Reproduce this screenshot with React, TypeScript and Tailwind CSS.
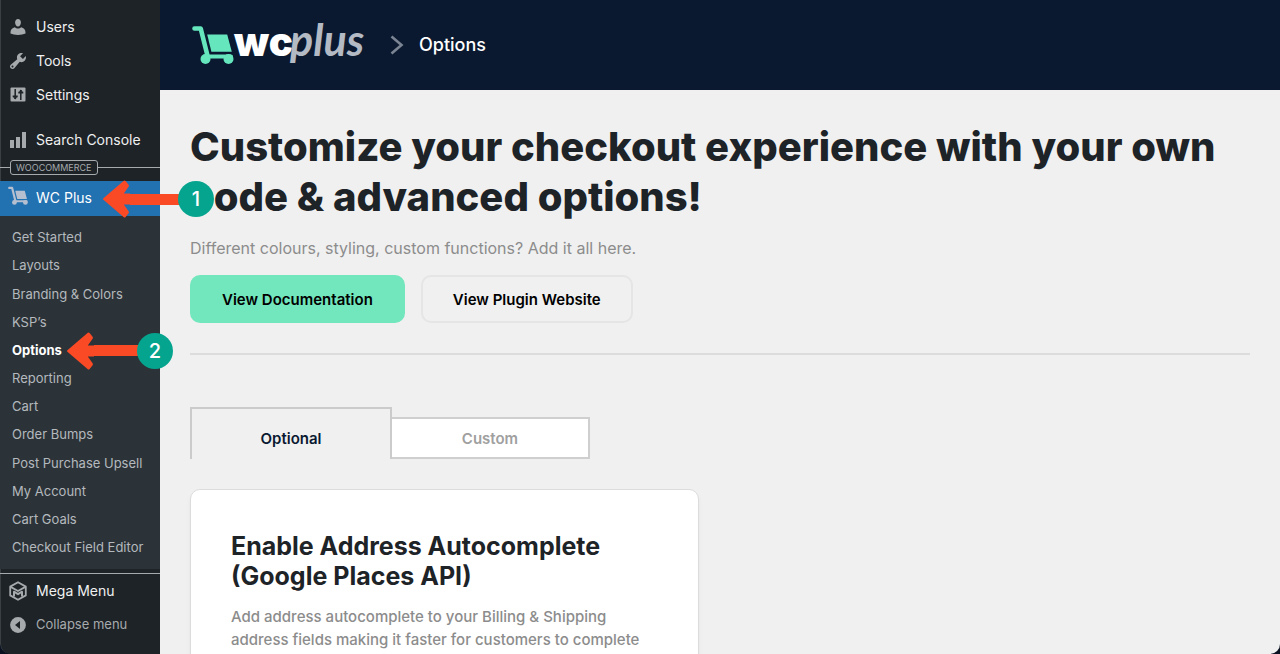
import type { ReactNode } from "react";
import clsx from "clsx";

const SUBMENU = [
  "Get Started",
  "Layouts",
  "Branding & Colors",
  "KSP’s",
  "Options",
  "Reporting",
  "Cart",
  "Order Bumps",
  "Post Purchase Upsell",
  "My Account",
  "Cart Goals",
  "Checkout Field Editor",
];

const ACTIVE_ITEM = "Options";

function UsersIcon() {
  return (
    <svg viewBox="0 0 20 20" className="size-5" fill="currentColor">
      <path d="M10 9.400c-1.700 0-2.900-2-2.900-4S8.300 2 10 2s2.900 1.400 2.900 3.400-1.200 4-2.900 4z" />
      <path d="M6.800 10.200c.9.900 2 1.300 3.200 1.300s2.300-.4 3.200-1.300c2.500.5 4.300 2.500 4.300 5v1.300c-1.900.9-4.500 1.400-7.500 1.400s-5.600-.5-7.500-1.400v-1.300c0-2.500 1.800-4.500 4.300-5z" />
    </svg>
  );
}

function ToolsIcon() {
  return (
    <svg viewBox="0 0 20 20" className="size-5" fill="currentColor">
      <path d="M16.680 9.770a4.543 4.543 0 0 1-4.950.99l-5.410 6.520c-.99.990-2.590.990-3.580 0s-.99-2.590 0-3.570l6.520-5.420c-.68-1.650-.35-3.610.99-4.950 1.280-1.280 3.120-1.620 4.720-1.060l-2.890 2.890 2.820 2.820 2.860-2.870c.53 1.580.18 3.390-1.080 4.650zM3.810 16.210c.4.390 1.040.390 1.430 0 .4-.4.400-1.040 0-1.430-.39-.4-1.030-.4-1.430 0a1.020 1.020 0 0 0 0 1.430z" />
    </svg>
  );
}

function SettingsIcon() {
  return (
    <svg viewBox="0 0 20 20" className="size-5">
      <rect x="2.500" y="2.500" width="15" height="14" rx="1" fill="currentColor" />
      <g stroke="#1d2327" fill="none">
        <path d="M7.200 4v10M12.800 5v10" strokeWidth="1.500" />
        <path d="M4.700 11.300h5M10.300 7.700h5" strokeWidth="1.800" />
      </g>
      <path d="M5.200 12.200h4l-2 2.300zM10.800 6.800h4l-2-2.300z" fill="#1d2327" />
    </svg>
  );
}

function ChartIcon() {
  return (
    <svg viewBox="0 0 20 20" className="size-5" fill="currentColor">
      <path d="M2 10h4v8H2zM8 7h4v11H8zM14 2h4v16h-4z" />
    </svg>
  );
}

function MegaMenuIcon() {
  return (
    <svg
      viewBox="0 0 20 20"
      className="size-5"
      fill="none"
      stroke="currentColor"
      strokeWidth="1.800"
      strokeLinejoin="round"
    >
      <path d="M10 1.200l7.800 4.400v8.800L10 18.800l-7.800-4.400V5.600z" />
      <path d="M2.600 5.900L10 10l7.400-4.100" />
      <path d="M6 15.500V10.700l4 2.500 4-2.500v4.800" strokeWidth="2" />
    </svg>
  );
}

function CollapseIcon() {
  return (
    <svg viewBox="0 0 20 20" className="size-5">
      <circle cx="10" cy="10" r="7.900" fill="currentColor" />
      <path d="M12 6v8l-5-4z" fill="#1d2327" />
    </svg>
  );
}

function CartMark({ className }: { className: string }) {
  return (
    <svg viewBox="0 0 42 39" className={className} fill="currentColor">
      <path
        d="M2.500 2.500h6.200l7 28"
        fill="none"
        stroke="currentColor"
        strokeWidth="4.600"
        strokeLinecap="round"
        strokeLinejoin="round"
      />
      <path d="M13 30.500h26" stroke="currentColor" strokeWidth="4" strokeLinecap="round" />
      <path d="M15.200 8.500h20l4.600 17.200H19.400z" />
      <circle cx="13.500" cy="33" r="5" />
      <circle cx="36.500" cy="33" r="5" />
    </svg>
  );
}

function MenuLink({ icon, children }: { icon: ReactNode; children: ReactNode }) {
  return (
    <a href="#" className="flex h-[34px] items-center gap-2 pl-2 text-sm text-[#f0f0f1]">
      <span className="text-[#a7aaad]">{icon}</span>
      {children}
    </a>
  );
}

type StepArrowProps = {
  step: number;
  className: string;
};

function StepArrow({ step, className }: StepArrowProps) {
  return (
    <div className={clsx("absolute flex h-[38px] items-center", className)}>
      <svg viewBox="0 0 27 38" className="h-[38px] w-[27px] shrink-0" fill="#f94a25">
        <path d="M.4 18.200L20.800.8Q21.800 0 22.600 1l3 3.800q.6.900 0 1.900L20.800 13.500H27v11h-6.200L25.600 31.300q.6 1 0 1.900L22.600 37q-.8 1-1.800.2L.4 19.800q-.8-.8 0-1.600z" />
      </svg>
      <div className="h-[11px] grow bg-[#f94a25]" />
      <div className="-ml-1 flex size-9 shrink-0 items-center justify-center rounded-full bg-[#05a48e] text-xl font-medium text-white">
        {step}
      </div>
    </div>
  );
}

function Sidebar() {
  return (
    <nav className="relative z-10 w-40 shrink-0 rounded-bl-[10px] border-l border-l-[#3a3f43] bg-[#1d2327] pt-[10px]">
      <div className="-ml-px">
        <MenuLink icon={<UsersIcon />}>Users</MenuLink>
        <MenuLink icon={<ToolsIcon />}>Tools</MenuLink>
        <MenuLink icon={<SettingsIcon />}>Settings</MenuLink>
        <div className="h-[11px]" />
        <MenuLink icon={<ChartIcon />}>Search Console</MenuLink>

        <div className="flex h-6 items-center pb-[3px]">
          <div className="h-px w-[10px] bg-[#a7aaad]" />
          <span className="flex h-[15px] items-center rounded-[3px] border border-[#a7aaad] px-[5px] text-[9px] text-[#a7aaad]">
            WOOCOMMERCE
          </span>
          <div className="h-px grow bg-[#a7aaad]" />
        </div>

        <div className="relative">
          <a href="#" className="flex h-[35px] items-center gap-2 bg-[#2271b1] pb-0.5 pl-2 text-sm text-white">
            <CartMark className="mb-1 size-5 text-[#b5bfd0]" />
            WC Plus
          </a>
          <StepArrow step={1} className="-top-px left-[103px] w-[111px]" />
        </div>

        <ul className="grid h-[353px] auto-rows-fr bg-[#2c3338] pt-2 pb-[7px]">
          {SUBMENU.map((item) => (
            <li key={item} className="relative flex items-center">
              <a
                href="#"
                className={clsx("pl-3 text-[13px]", item === ACTIVE_ITEM ? "font-bold text-white" : "text-[#b4b9be]")}
              >
                {item}
              </a>
              {item === ACTIVE_ITEM && <StepArrow step={2} className="-top-[5px] left-[67px] w-[106px]" />}
            </li>
          ))}
        </ul>

        <div className="mt-1 h-px bg-[#a7aaad]" />
        <MenuLink icon={<MegaMenuIcon />}>Mega Menu</MenuLink>
        <button type="button" className="flex h-[34px] w-full items-center gap-2 pl-2 text-[13px] text-[#a7aaad]">
          <CollapseIcon />
          Collapse menu
        </button>
      </div>
    </nav>
  );
}

function Header() {
  return (
    <header className="flex h-[90px] shrink-0 items-center bg-[#0a1930] pl-8">
      <a href="#" className="flex items-center" aria-label="WC Plus">
        <CartMark className="h-[39px] w-[42px] text-[#65e6bd]" />
        <svg viewBox="0 0 132 60" className="h-[60px] w-[132px] overflow-visible">
          <text x="0" y="41" fill="#fff" className="font-['Inter'] text-[40px] font-black">
            wc
          </text>
          <text x="56" y="41" fill="#b4bac4" className="font-['Lato'] text-[43px] font-bold italic">
            plus
          </text>
        </svg>
      </a>
      <svg viewBox="0 0 14 20" className="ml-6 h-5 w-[14px]" fill="none" stroke="#7b8492" strokeWidth="2.600">
        <path d="M1.500 1.500L11.500 10l-10 8.500" />
      </svg>
      <span className="ml-[15px] text-lg font-medium text-white">Options</span>
    </header>
  );
}

export default function App() {
  return (
    <div className="h-screen overflow-hidden bg-[#0a1222] font-['Inter',sans-serif]">
      <div className="flex h-full overflow-hidden rounded-b-[10px]">
        <Sidebar />
        <div className="flex min-w-0 grow flex-col bg-[#f0f0f0]">
          <Header />
          <main className="px-[30px] pt-8">
            <h1 className="text-[40px] leading-[50px] font-extrabold text-[#1d2327]">
              Customize your checkout experience with your own code &amp; advanced options!
            </h1>
            <p className="mt-[14px] text-base text-[#8c8c8c]">
              Different colours, styling, custom functions? Add it all here.
            </p>
            <div className="mt-[15px] flex gap-4 text-[15px] font-semibold text-black">
              <a href="#" className="flex h-12 items-center rounded-[10px] bg-[#72e6bc] px-8 pt-0.5">
                View Documentation
              </a>
              <a href="#" className="flex h-12 items-center rounded-[10px] border-2 border-[#e5e5e5] px-[30px] pt-0.5">
                View Plugin Website
              </a>
            </div>
            <hr className="mt-[30px] border-t-2 border-[#dcdcdc]" />

            <div role="tablist" className="mt-[52px] flex items-end text-[15px] font-semibold">
              <button
                type="button"
                role="tab"
                aria-selected="true"
                className="h-[52px] w-[202px] border-2 border-b-0 border-[#cbcbcb] pt-2.5 text-[#0a1930]"
              >
                Optional
              </button>
              <button
                type="button"
                role="tab"
                aria-selected="false"
                className="h-[42px] w-[198px] border-2 border-l-0 border-[#cfcfcf] bg-white pt-0.5 text-[#a0a0a0]"
              >
                Custom
              </button>
            </div>

            <section className="mt-[30px] max-w-[509px] rounded-[10px] border border-[#dcdcdc] bg-white p-10 shadow-md shadow-black/5">
              <h2 className="pt-px text-[25px] leading-[30px] font-bold text-[#1d2327]">
                Enable Address Autocomplete (Google Places API)
              </h2>
              <p className="mt-[14px] text-[15px] leading-[23px] font-medium text-[#8c8c8c]">
                Add address autocomplete to your Billing &amp; Shipping address fields making it faster for customers to
                complete
              </p>
            </section>
          </main>
        </div>
      </div>
    </div>
  );
}
